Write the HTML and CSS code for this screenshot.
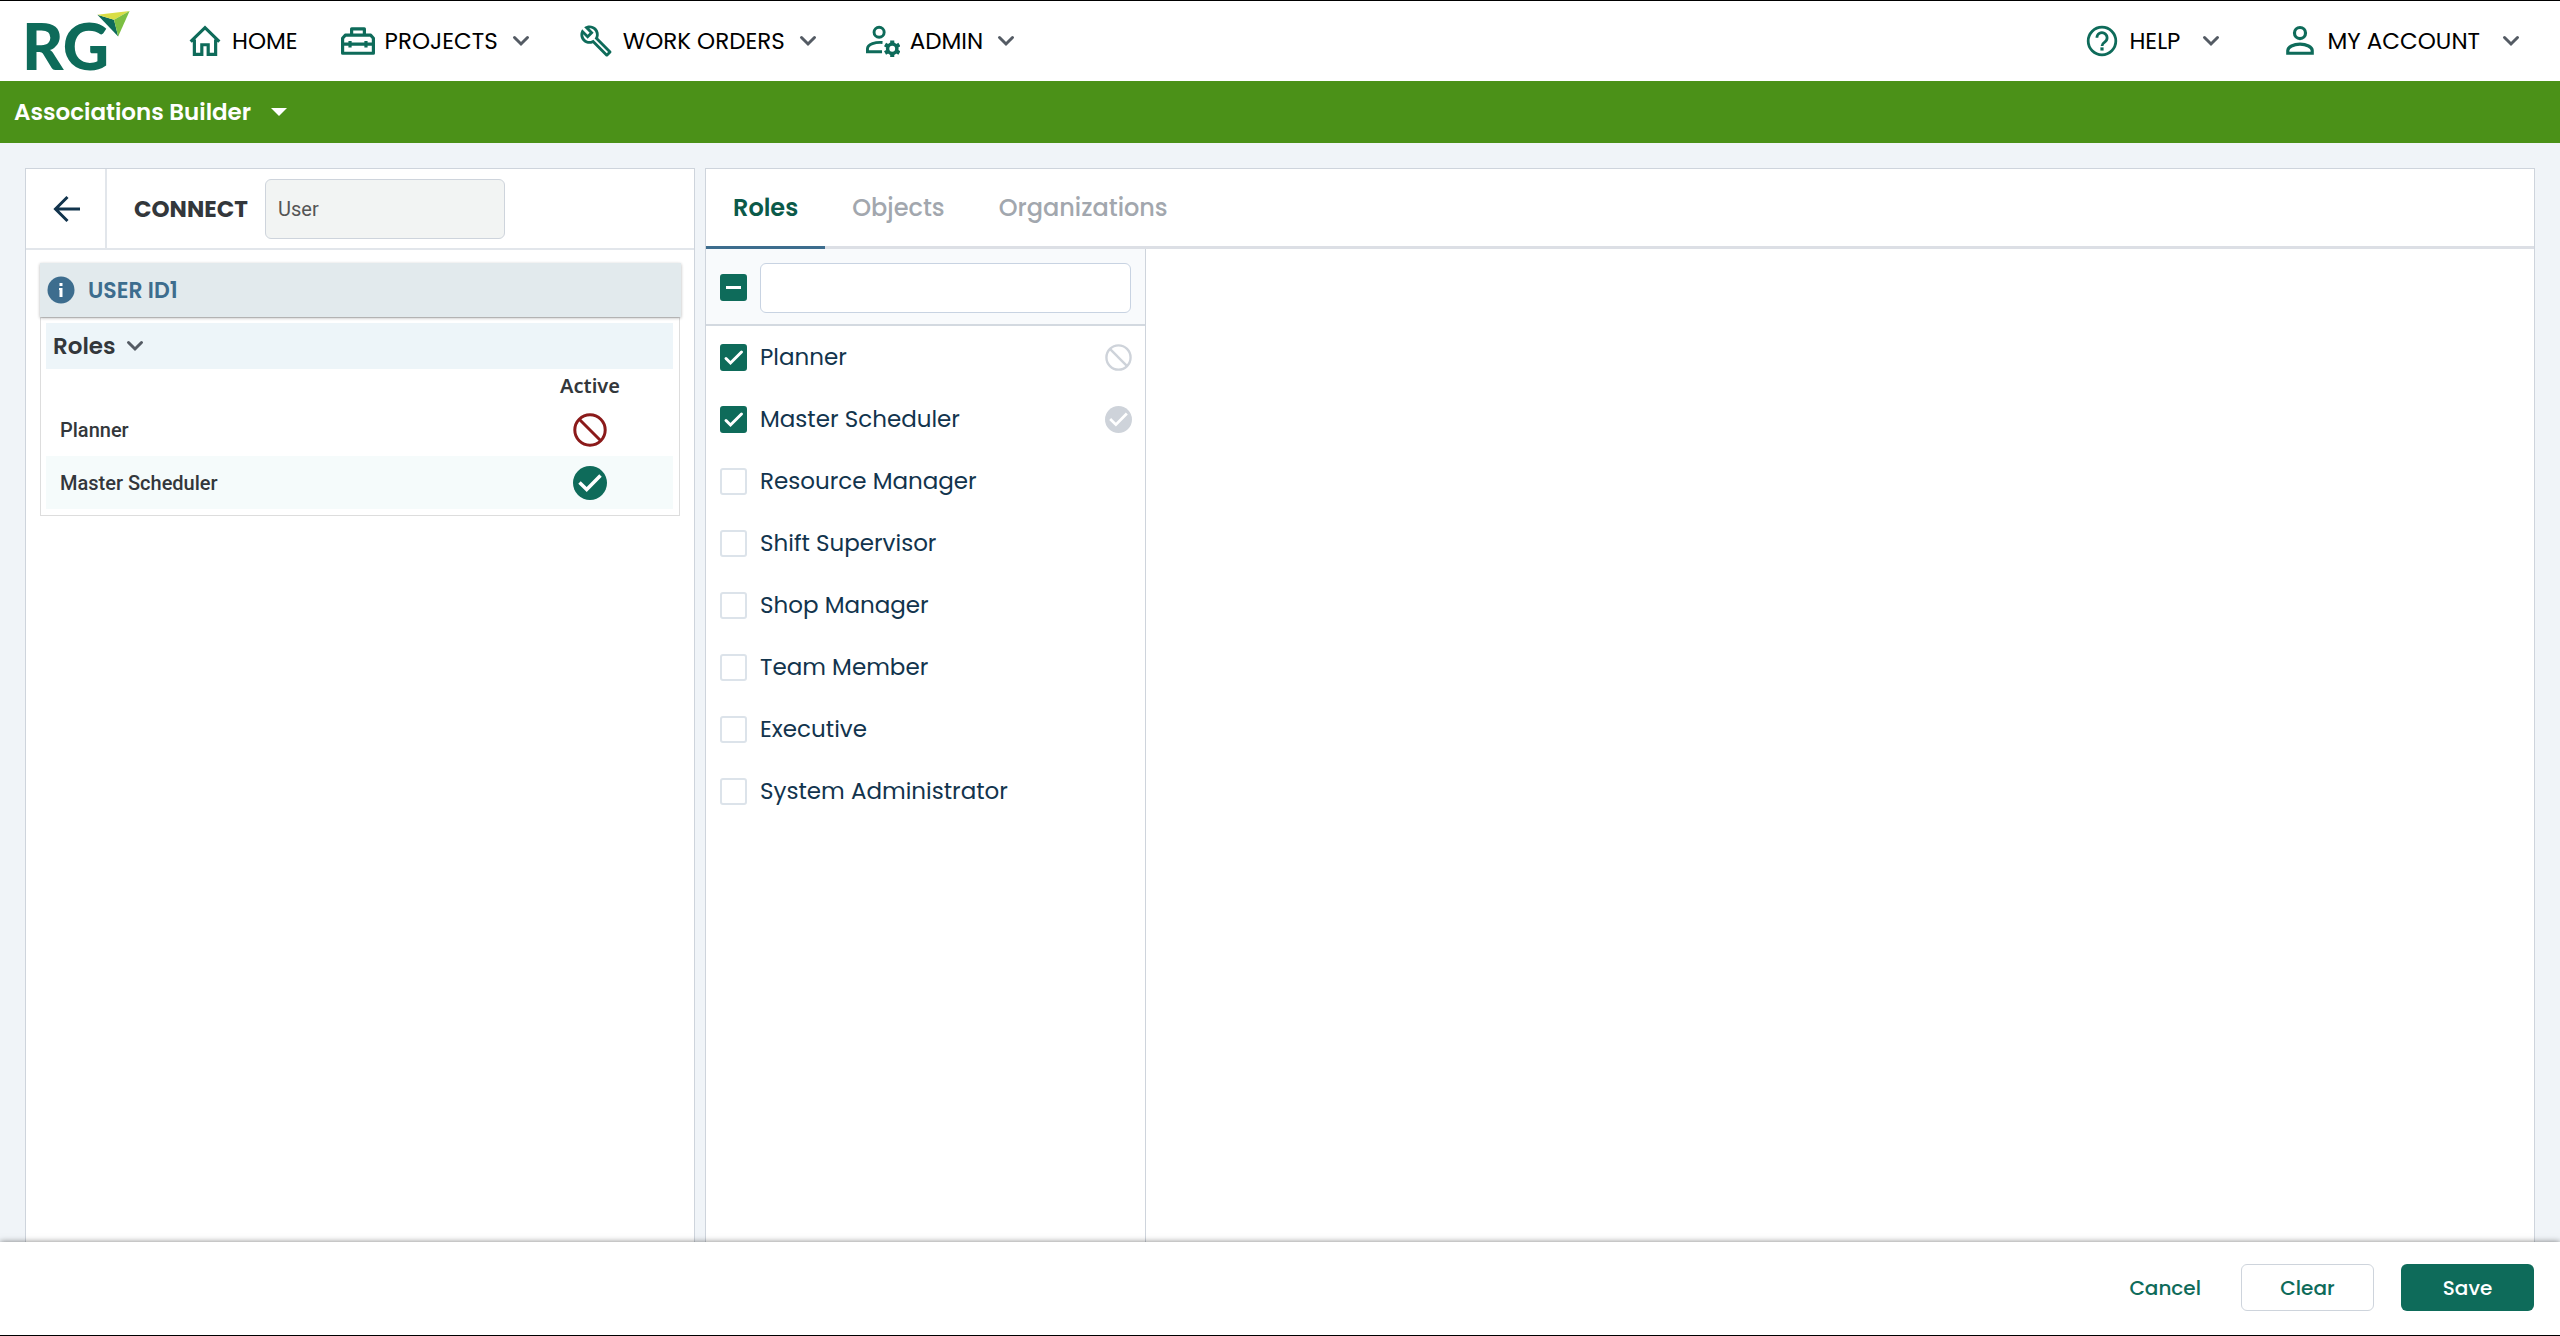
FILE: index.html
```html
<!DOCTYPE html>
<html lang="en">

<head>
    <meta charset="utf-8">
    <meta name="viewport" content="width=device-width, initial-scale=1">
    <title>Associations Builder</title>
    <link rel="stylesheet" href="styles.css">
</head>

<body>
    <svg class="sprite" aria-hidden="true">
        <symbol id="chevron" viewBox="0 0 18 12">
            <path d="M2.5 2.5L9 9l6.500-6.500" fill="none" stroke="currentColor" stroke-width="3" stroke-linecap="round" />
        </symbol>
        <symbol id="ban" viewBox="0 0 34 34">
            <circle cx="17" cy="17" r="15.200" fill="none" stroke="currentColor" stroke-width="3" />
            <path d="M6.500 6.500l21 21" stroke="currentColor" stroke-width="3" />
        </symbol>
        <symbol id="tick" viewBox="0 0 34 34">
            <circle cx="17" cy="17" r="17" fill="currentColor" />
            <path d="M6.500 16.500l7.200 7L27.500 9.500" fill="none" stroke="#fff" stroke-width="3.500" />
        </symbol>
    </svg>

    <header class="topbar">
        <a class="logo" href="#" aria-label="RG">RG
            <svg class="logo-mark" viewBox="0 0 32 25" aria-hidden="true">
                <path d="M0 3.500L16 8.500L20 24.500z" fill="#0e6b5a" />
                <path d="M0 3.500L31 0L16 8.500z" fill="#d9de45" />
                <path d="M31 0L16 8.500L20 24.500z" fill="#7cbf42" />
            </svg>
        </a>
        <nav class="nav">
            <a class="nav-item" href="#">
                <svg class="nav-icon" viewBox="0 0 32 32">
                    <path d="M2.500 16.500L16 3.500l13.500 13M6 14.500V28.500h7v-9h6v9h7V14.500" fill="none" stroke="currentColor" stroke-width="3" />
                </svg>
                <span>HOME</span>
            </a>
            <a class="nav-item has-menu" href="#">
                <svg class="nav-icon" viewBox="0 0 32 32">
                    <path d="M10 10.500V4.500h12v6M4 10.500h24l2.500 3V27.500h-29V13.500zM1.500 19h29M8.500 16v6M23.500 16v6" fill="none" stroke="currentColor" stroke-width="3" stroke-linejoin="round" />
                </svg>
                <span>PROJECTS</span>
                <svg class="chevron"><use href="#chevron" /></svg>
            </a>
            <a class="nav-item has-menu" href="#">
                <svg class="nav-icon" viewBox="0 0 24 24">
                    <path d="M22.610 18.990l-9.080-9.080c.93-2.340.45-5.100-1.440-7C9.790.61 6.210.4 3.660 2.260L7.500 6.110 6.080 7.520 2.250 3.690C.39 6.230.6 9.820 2.900 12.110c1.860 1.860 4.570 2.350 6.890 1.480l9.110 9.110c.39.39 1.020.39 1.410 0l2.300-2.300c.4-.38.4-1.010 0-1.410zm-3 1.600l-9.460-9.460c-.61.45-1.290.72-2 .82-1.360.2-2.790-.21-3.830-1.250C3.370 9.760 2.930 8.500 3 7.260l3.090 3.090 4.240-4.240-3.090-3.090c1.240-.07 2.490.37 3.440 1.310 1.080 1.080 1.490 2.570 1.240 3.960-.12.71-.42 1.370-.88 1.960l9.450 9.450-.88.89z" fill="currentColor" />
                </svg>
                <span>WORK ORDERS</span>
                <svg class="chevron"><use href="#chevron" /></svg>
            </a>
            <a class="nav-item has-menu" href="#">
                <svg class="nav-icon" viewBox="0 0 35 34">
                    <circle cx="13.500" cy="8" r="5.200" fill="none" stroke="currentColor" stroke-width="3" />
                    <path d="M17 18.500c-7-.5-15.500 1.500-15.500 6.500v3h15" fill="none" stroke="currentColor" stroke-width="3" />
                    <circle cx="27" cy="25" r="4.800" fill="none" stroke="currentColor" stroke-width="3.600" />
                    <path d="M27 16.500v3M27 30.500v3M19.600 20.700l2.600 1.500M31.800 27.800l2.600 1.500M19.600 29.300l2.600-1.500M31.800 22.200l2.600-1.500" stroke="currentColor" stroke-width="4.200" />
                </svg>
                <span>ADMIN</span>
                <svg class="chevron"><use href="#chevron" /></svg>
            </a>
        </nav>
        <nav class="nav nav-right">
            <a class="nav-item has-menu" href="#">
                <svg class="nav-icon" viewBox="0 0 32 32">
                    <circle cx="16" cy="16" r="13" fill="none" stroke="currentColor" stroke-width="2.600" />
                    <path d="M11.200 13a4.800 4.800 0 1 1 7.600 3.800c-1.800 1.300-2.800 2-2.800 4" fill="none" stroke="currentColor" stroke-width="2.600" />
                    <path d="M14.500 22h3v3h-3z" fill="currentColor" />
                </svg>
                <span>HELP</span>
                <svg class="chevron"><use href="#chevron" /></svg>
            </a>
            <a class="nav-item has-menu" href="#">
                <svg class="nav-icon" viewBox="0 0 32 32">
                    <circle cx="16" cy="8.500" r="5.200" fill="none" stroke="currentColor" stroke-width="3" />
                    <path d="M4.500 27.500V25c0-3.500 5.500-6 11.500-6s11.500 2.500 11.500 6v2.500z" fill="none" stroke="currentColor" stroke-width="3" />
                </svg>
                <span>MY ACCOUNT</span>
                <svg class="chevron"><use href="#chevron" /></svg>
            </a>
        </nav>
    </header>

    <button class="page-title" type="button">
        Associations Builder
        <span class="caret"></span>
    </button>

    <main class="content">
        <section class="panel">
            <div class="connect">
                <button class="back" type="button" aria-label="Back">
                    <svg viewBox="0 0 28 28">
                        <path d="M28 14H3M15.500 2L3.500 14l12 12" fill="none" stroke="currentColor" stroke-width="3" />
                    </svg>
                </button>
                <label class="connect-label" for="connectType">CONNECT</label>
                <input class="connect-input" id="connectType" type="text" value="User" readonly>
            </div>

            <div class="user-bar">
                <svg viewBox="0 0 28 28">
                    <circle cx="14" cy="14" r="13.500" fill="#3d6d8e" />
                    <path d="M12.500 7h3v3h-3zM12 12h3.500v9h-3v-7h-.5z" fill="#fff" />
                </svg>
                <span>USER ID1</span>
            </div>
            <div class="user-card">
                <button class="group" type="button">
                    Roles
                    <svg class="chevron"><use href="#chevron" /></svg>
                </button>
                <table class="roles-table">
                    <thead>
                        <tr>
                            <td></td>
                            <th class="active-col" scope="col">Active</th>
                        </tr>
                    </thead>
                    <tbody>
                        <tr>
                            <th scope="row">Planner</th>
                            <td class="active-col"><svg class="status inactive"><use href="#ban" /></svg></td>
                        </tr>
                        <tr>
                            <th scope="row">Master Scheduler</th>
                            <td class="active-col"><svg class="status"><use href="#tick" /></svg></td>
                        </tr>
                    </tbody>
                </table>
            </div>
        </section>

        <section class="panel assoc">
            <div class="tabs" role="tablist">
                <button class="tab selected" type="button" role="tab" aria-selected="true">Roles</button>
                <button class="tab" type="button" role="tab" aria-selected="false">Objects</button>
                <button class="tab" type="button" role="tab" aria-selected="false">Organizations</button>
            </div>
            <div class="role-list">
                <div class="filter">
                    <input class="check" id="allRoles" type="checkbox" aria-label="Select all roles">
                    <input class="filter-input" type="text" aria-label="Filter roles">
                </div>
                <label class="role"><input class="check" type="checkbox" checked><span>Planner</span><svg class="role-status" viewBox="0 0 34 34"><use href="#ban" /></svg></label>
                <label class="role"><input class="check" type="checkbox" checked><span>Master Scheduler</span><svg class="role-status" viewBox="0 0 34 34"><use href="#tick" /></svg></label>
                <label class="role"><input class="check" type="checkbox"><span>Resource Manager</span></label>
                <label class="role"><input class="check" type="checkbox"><span>Shift Supervisor</span></label>
                <label class="role"><input class="check" type="checkbox"><span>Shop Manager</span></label>
                <label class="role"><input class="check" type="checkbox"><span>Team Member</span></label>
                <label class="role"><input class="check" type="checkbox"><span>Executive</span></label>
                <label class="role"><input class="check" type="checkbox"><span>System Administrator</span></label>
            </div>
        </section>
    </main>

    <footer class="actions">
        <button class="btn btn-link" type="button">Cancel</button>
        <button class="btn btn-outline" type="button">Clear</button>
        <button class="btn btn-primary" type="button">Save</button>
    </footer>

    <script>
        const allRoles = document.getElementById("allRoles");
        const roleChecks = [...document.querySelectorAll(".role .check")];

        function updateAllRoles() {
            const count = roleChecks.filter(c => c.checked).length;
            allRoles.checked = count === roleChecks.length;
            allRoles.indeterminate = count > 0 && count < roleChecks.length;
        }

        allRoles.addEventListener("change", () => {
            roleChecks.forEach(c => c.checked = allRoles.checked);
        });
        roleChecks.forEach(c => c.addEventListener("change", updateAllRoles));
        updateAllRoles();
    </script>
</body>

</html>
```

FILE: styles.css
```css
* {
    box-sizing: border-box;
}

body {
    display: flex;
    flex-direction: column;
    min-height: 100vh;
    margin: 0;
    border-top: 1px solid #000;
    border-bottom: 1px solid #000;
    background-color: #f0f4f8;
    color: #33373b;
    font-family: Poppins, Inter, sans-serif;
    font-size: 23px;
}

button,
input {
    margin: 0;
    font: inherit;
    color: inherit;
}

button {
    padding: 0;
    border: 0;
    background: none;
    cursor: pointer;
}

a {
    color: inherit;
    text-decoration: none;
}

.sprite {
    display: none;
}

.chevron {
    width: 18px;
    height: 12px;
    color: #545b64;
}

/* top bar */
.topbar {
    display: flex;
    align-items: center;
    height: 80px;
    padding: 0 34px 0 22px;
    background-color: #fff;
}

.logo {
    position: relative;
    width: 109px;
    margin-right: 57px;
    padding-top: 10px;
    color: #0e6b5a;
    font-family: Lato, sans-serif;
    font-size: 64px;
    font-weight: 900;
    line-height: 60px;
}

.logo-mark {
    position: absolute;
    top: 5px;
    right: 0;
    width: 34px;
    height: 26px;
}

.nav {
    display: flex;
    align-items: center;
    gap: 43px;
    color: #000;
}

.nav-right {
    gap: 57px;
    margin-left: auto;
}

.nav-item {
    display: flex;
    align-items: center;
}

.has-menu {
    padding-right: 6px;
}

.nav-item span {
    margin-left: 10px;
}

.nav-item .chevron {
    margin-left: 14px;
}

.nav-right .chevron {
    margin-left: 22px;
}

.nav-icon {
    width: 34px;
    height: 34px;
    color: #0e6b5a;
}

/* page title */
.page-title {
    display: flex;
    align-items: center;
    gap: 20px;
    height: 62px;
    padding: 0 14px;
    background-color: #4b9118;
    color: #fff;
    font-weight: 600;
}

.caret {
    border: 8px solid transparent;
    border-top-color: #fff;
    border-bottom: 0;
}

/* panels */
.content {
    display: grid;
    flex: 1;
    grid-template-columns: 670px 1fr;
    gap: 10px;
    padding: 25px 25px 0;
}

.panel {
    border: 1px solid #ced4dc;
    border-bottom: 0;
    background-color: #fff;
}

.connect {
    display: flex;
    align-items: center;
    height: 81px;
    border-bottom: 2px solid #e2e6eb;
}

.back {
    display: flex;
    align-items: center;
    justify-content: center;
    align-self: stretch;
    width: 81px;
    border-right: 2px solid #e2e6eb;
    color: #12344d;
}

.back svg {
    width: 28px;
    height: 28px;
}

.connect-label {
    width: 132px;
    padding-left: 27px;
    margin-right: 26px;
    font-weight: 700;
}

.connect-input {
    width: 240px;
    height: 60px;
    padding: 0 12px;
    border: 1px solid #ced4dc;
    border-radius: 6px;
    background-color: #f2f4f3;
    color: #555;
    font-family: Roboto, sans-serif;
    font-size: 20px;
}

.user-bar {
    position: relative;
    display: flex;
    align-items: center;
    gap: 13px;
    height: 54px;
    margin: 13px 13px 0 14px;
    padding: 0 7px;
    background-color: #e2eaed;
    box-shadow: 0 1px 3px rgba(0, 0, 0, 0.3);
    color: #3d6d8e;
    font-size: 22px;
    font-weight: 600;
}

.user-bar svg {
    width: 28px;
    height: 28px;
}

.user-card {
    margin: 0 14px;
    padding: 5px 6px 6px 5px;
    border: 1px solid #ddd;
}

.group {
    display: flex;
    align-items: center;
    gap: 10px;
    width: 100%;
    height: 46px;
    padding: 0 7px;
    background-color: #edf5f9;
    font-weight: 600;
}

.roles-table {
    width: 100%;
    border-collapse: collapse;
    font-family: Roboto, sans-serif;
    font-size: 20px;
}

.roles-table th,
.roles-table td {
    height: 53px;
    padding: 0 14px;
    font-weight: 500;
    text-align: left;
}

.roles-table thead th,
.roles-table thead td {
    height: 34px;
}

.roles-table .active-col {
    width: 166px;
    text-align: center;
}

.roles-table thead th {
    font-family: "Noto Sans", sans-serif;
    font-weight: 600;
    line-height: 28px;
}

.roles-table tbody tr:nth-child(even) {
    background-color: #f5fbfb;
}

.status {
    display: block;
    width: 34px;
    height: 34px;
    margin: 0 auto;
    color: #0e6b5a;
}

.status.inactive {
    color: #8b1a1a;
}

/* associations */
.assoc {
    display: flex;
    flex-direction: column;
}

.tabs {
    display: flex;
    height: 80px;
    border-bottom: 3px solid #dcdfe5;
}

.tab {
    height: 80px;
    padding: 0 27px;
    border-bottom: 3px solid transparent;
    color: #a2a7ae;
    font-size: 24px;
    font-weight: 500;
}

.tab.selected {
    border-bottom-color: #3d6d8e;
    color: #0b5a49;
    font-weight: 600;
}

.role-list {
    flex: 1;
    width: 440px;
    border-right: 1px solid #ced4dc;
}

.filter {
    display: flex;
    align-items: center;
    gap: 13px;
    height: 77px;
    padding: 2px 14px 0;
    border-bottom: 2px solid #d3d9e0;
    background-color: #f8fafc;
}

.filter-input {
    flex: 1;
    min-width: 0;
    height: 50px;
    padding: 0 12px;
    border: 1px solid #c8d3e2;
    border-radius: 6px;
    background-color: #fff;
}

.check {
    appearance: none;
    flex: none;
    width: 27px;
    height: 27px;
    border: 2px solid #dce3ea;
    border-radius: 3px;
    background: #fff center / 27px 27px no-repeat;
}

.check:checked,
.check:indeterminate {
    border-color: #0e6b5a;
    background-color: #0e6b5a;
}

.check:checked {
    background-image: url("data:image/svg+xml,%3Csvg xmlns='http://www.w3.org/2000/svg' viewBox='0 0 27 27'%3E%3Cpath d='M6 14.5l4.500 4.500L21.500 8' fill='none' stroke='%23fff' stroke-width='3' stroke-linecap='round'/%3E%3C/svg%3E");
}

.check:indeterminate {
    background-image: url("data:image/svg+xml,%3Csvg xmlns='http://www.w3.org/2000/svg' viewBox='0 0 27 27'%3E%3Cpath d='M6 13.5h15' stroke='%23fff' stroke-width='3'/%3E%3C/svg%3E");
}

.role {
    display: flex;
    align-items: center;
    gap: 13px;
    height: 62px;
    padding: 0 13px 0 14px;
    color: #12344d;
}

.role-status {
    width: 27px;
    height: 27px;
    margin-left: auto;
    color: #ced3da;
}

/* footer */
.actions {
    position: relative;
    display: flex;
    align-items: center;
    justify-content: flex-end;
    gap: 27px;
    height: 93px;
    padding: 0 26px 2px;
    background-color: #fff;
    box-shadow: 0 0 6px rgba(0, 0, 0, 0.5);
}

.btn {
    width: 133px;
    height: 47px;
    border-radius: 6px;
    color: #0e6b5a;
    font-size: 20px;
    font-weight: 500;
}

.btn-link {
    width: auto;
    padding: 0 13px;
}

.btn-outline {
    border: 1px solid #ced4dc;
}

.btn-primary {
    background-color: #0e6b5a;
    color: #fff;
}
```
